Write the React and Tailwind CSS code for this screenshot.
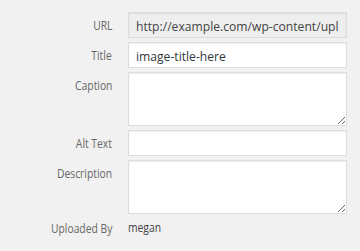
function Label({ children, top }) {
  return (
    <div className={"w-[112px] shrink-0 text-right leading-[16px] " + (top ? "pt-[4px]" : "")}>
      <span className="inline-block origin-right scale-x-[0.86] text-[12px] text-[#666] whitespace-nowrap">
        {children}
      </span>
    </div>
  );
}

function Field({ value, readonly }) {
  return (
    <div
      className={
        "w-[219px] h-[26px] border border-[#ddd] px-[7px] flex items-center shadow-[inset_0_1px_2px_rgba(0,0,0,0.07)] " +
        (readonly ? "bg-[#eee]" : "bg-white")
      }
    >
      <div className="w-full overflow-hidden whitespace-nowrap">
        <span
          className={
            "inline-block origin-left scale-x-[0.92] text-[13.2px] leading-[18px] " +
            (readonly ? "text-[#444]" : "text-[#32373c]")
          }
        >
          {value}
        </span>
      </div>
    </div>
  );
}

export default function App() {
  const area =
    "block w-[219px] h-[54px] border border-[#ddd] bg-white px-[7px] text-[12px] shadow-[inset_0_1px_2px_rgba(0,0,0,0.07)] outline-none";
  return (
    <div
      className="w-[360px] h-[251px] bg-[#f1f1f1] pt-[12px] flex flex-col gap-[4px]"
      style={{ fontFamily: '"Open Sans", sans-serif' }}
    >
      <div className="flex items-center gap-[16px]">
        <Label>URL</Label>
        <Field readonly value="http://example.com/wp-content/upl" />
      </div>
      <div className="flex items-center gap-[16px]">
        <Label>Title</Label>
        <Field value="image-title-here" />
      </div>
      <div className="flex items-start gap-[16px]">
        <Label top>Caption</Label>
        <textarea className={area} />
      </div>
      <div className="flex items-center gap-[16px]">
        <Label>Alt Text</Label>
        <Field value="" />
      </div>
      <div className="flex items-start gap-[16px]">
        <Label top>Description</Label>
        <textarea className={area} />
      </div>
      <div className="flex items-center gap-[16px] mt-[1px]">
        <Label>Uploaded By</Label>
        <span className="inline-block origin-left scale-x-[0.86] text-[12px] leading-[16px] text-[#444]">megan</span>
      </div>
    </div>
  );
}
